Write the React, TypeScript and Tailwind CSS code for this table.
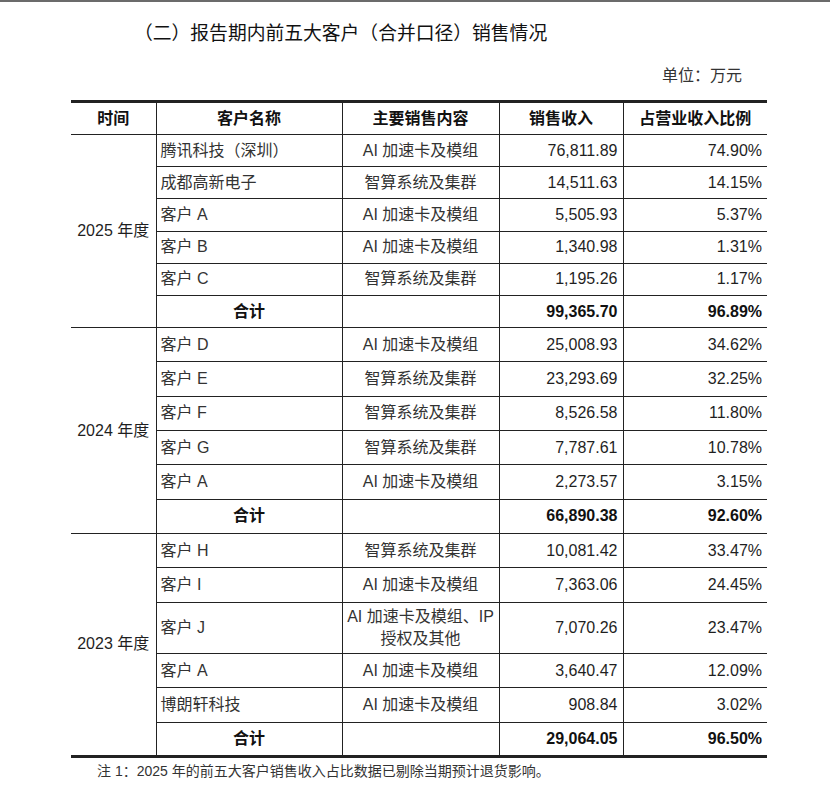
type Row = { name: string; content: React.ReactNode; revenue: string; ratio: string; h: string };

type Group = { year: string; rows: Row[]; total: [string, string]; totalH: string; last?: boolean };

const AI = "AI 加速卡及模组";
const ZS = "智算系统及集群";

const groups: Group[] = [
  {
    year: "2025 年度",
    rows: [
      { name: "腾讯科技（深圳）", content: AI, revenue: "76,811.89", ratio: "74.90%", h: "h-[32.2px]" },
      { name: "成都高新电子", content: ZS, revenue: "14,511.63", ratio: "14.15%", h: "h-[32.2px]" },
      { name: "客户 A", content: AI, revenue: "5,505.93", ratio: "5.37%", h: "h-[32.2px]" },
      { name: "客户 B", content: AI, revenue: "1,340.98", ratio: "1.31%", h: "h-[32.2px]" },
      { name: "客户 C", content: ZS, revenue: "1,195.26", ratio: "1.17%", h: "h-[32.2px]" },
    ],
    total: ["99,365.70", "96.89%"],
    totalH: "h-[32.2px]",
  },
  {
    year: "2024 年度",
    rows: [
      { name: "客户 D", content: AI, revenue: "25,008.93", ratio: "34.62%", h: "h-[34.3px]" },
      { name: "客户 E", content: ZS, revenue: "23,293.69", ratio: "32.25%", h: "h-[34.3px]" },
      { name: "客户 F", content: ZS, revenue: "8,526.58", ratio: "11.80%", h: "h-[34.3px]" },
      { name: "客户 G", content: ZS, revenue: "7,787.61", ratio: "10.78%", h: "h-[34.3px]" },
      { name: "客户 A", content: AI, revenue: "2,273.57", ratio: "3.15%", h: "h-[34.3px]" },
    ],
    total: ["66,890.38", "92.60%"],
    totalH: "h-[34.3px]",
  },
  {
    year: "2023 年度",
    rows: [
      { name: "客户 H", content: ZS, revenue: "10,081.42", ratio: "33.47%", h: "h-[34.5px]" },
      { name: "客户 I", content: AI, revenue: "7,363.06", ratio: "24.45%", h: "h-[34.5px]" },
      {
        name: "客户 J",
        content: (
          <span className="block leading-[22px]">
            AI 加速卡及模组、IP
            <br />
            授权及其他
          </span>
        ),
        revenue: "7,070.26",
        ratio: "23.47%",
        h: "h-[51px]",
      },
      { name: "客户 A", content: AI, revenue: "3,640.47", ratio: "12.09%", h: "h-[34.3px]" },
      { name: "博朗轩科技", content: AI, revenue: "908.84", ratio: "3.02%", h: "h-[34.3px]" },
    ],
    total: ["29,064.05", "96.50%"],
    totalH: "h-[34.3px]",
    last: true,
  },
];

export default function App() {
  return (
    <div className="w-[830px] h-[786px] bg-white text-[#1f1f1f] font-[family-name:'Liberation_Sans','Noto_Sans_CJK_SC',sans-serif] overflow-hidden">
      <div className="h-[2px] bg-[#6b6b6b]" />

      {/* Title */}
      <h2 className="mt-[20px] ml-[134px] text-[18.8px] leading-[24px] font-normal text-[#111]">
        （二）报告期内前五大客户（合并口径）销售情况
      </h2>

      <div className="w-[767px] mt-[19px] text-right pr-[25px] text-[16px] leading-[22px] text-[#333]">
        单位：万元
      </div>

      {/* Table */}
      <table className="mt-[13px] ml-[71px] w-[696px] table-fixed border-collapse text-[16px] leading-[20px]">
        <colgroup>
          <col className="w-[85px]" />
          <col className="w-[186px]" />
          <col className="w-[157px]" />
          <col className="w-[124px]" />
          <col className="w-[144px]" />
        </colgroup>
        <thead>
          <tr className="h-[33px] font-bold text-[#111]">
            <th className="border-t-[3px] border-b border-[#222] font-bold">时间</th>
            <th className="border-t-[3px] border-b border-l border-[#222] font-bold">客户名称</th>
            <th className="border-t-[3px] border-b border-l border-[#222] font-bold">主要销售内容</th>
            <th className="border-t-[3px] border-b border-l border-[#222] font-bold">销售收入</th>
            <th className="border-t-[3px] border-b border-l border-[#222] font-bold">占营业收入比例</th>
          </tr>
        </thead>
        <tbody>
          {groups.map((g) => (
            <>
              {g.rows.map((r, i) => (
                <tr key={g.year + r.name + i} className={r.h}>
                  {i === 0 && (
                    <td
                      rowSpan={g.rows.length + 1}
                      className={`text-center align-middle border-r border-[#222] ${
                        g.last ? "border-b-[3px]" : "border-b"
                      }`}
                    >
                      {g.year}
                    </td>
                  )}
                  <td className="pl-[4px] border-b border-l border-[#222] text-[#333] whitespace-nowrap">{r.name}</td>
                  <td className="px-[2px] text-center border-b border-l border-[#222] text-[#333] whitespace-nowrap">
                    {r.content}
                  </td>
                  <td className="pr-[5px] text-right border-b border-l border-[#222]">{r.revenue}</td>
                  <td className="pr-[5px] text-right border-b border-l border-[#222]">{r.ratio}</td>
                </tr>
              ))}
              <tr key={g.year + "total"} className={`${g.totalH} font-bold text-[#111]`}>
                <td className={`text-center border-l border-[#222] ${g.last ? "border-b-[3px]" : "border-b"}`}>合计</td>
                <td className={`border-l border-[#222] ${g.last ? "border-b-[3px]" : "border-b"}`} />
                <td className={`pr-[5px] text-right border-l border-[#222] ${g.last ? "border-b-[3px]" : "border-b"}`}>
                  {g.total[0]}
                </td>
                <td className={`pr-[5px] text-right border-l border-[#222] ${g.last ? "border-b-[3px]" : "border-b"}`}>
                  {g.total[1]}
                </td>
              </tr>
            </>
          ))}
        </tbody>
      </table>

      <p className="mt-[3px] ml-[97px] text-[14px] leading-[20px] text-[#333]">
        注 1：2025 年的前五大客户销售收入占比数据已剔除当期预计退货影响。
      </p>
    </div>
  );
}
